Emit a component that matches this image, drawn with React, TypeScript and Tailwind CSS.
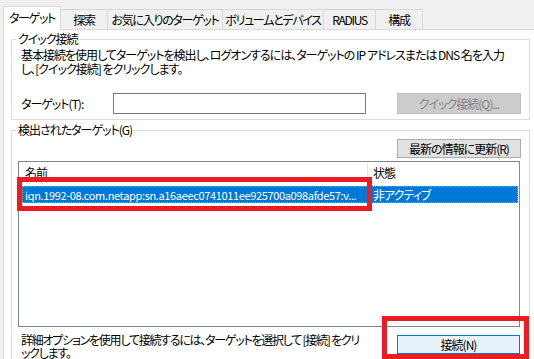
import React from "react";

const font = "font-['MS_UI_Gothic','Noto_Sans_CJK_JP',sans-serif] [font-feature-settings:'palt'] tracking-[-1px]";

function Tab({ label, w, selected }: { label: string; w: string; selected?: boolean }) {
  if (selected) {
    return (
      <div className={`${w} h-[24px] -mb-px relative z-10 bg-white border border-b-0 border-[#d9d9d9] flex items-center justify-center text-[12px] leading-[14px] pb-[2px] whitespace-nowrap tracking-[-1.3px]`}>
        {label}
      </div>
    );
  }
  return (
    <div className={`${w} h-[20px] bg-[#f0f0f0] border-t border-r border-[#d9d9d9] flex items-center justify-center text-[12px] leading-[14px] whitespace-nowrap tracking-[-1.3px]`}>
      {label}
    </div>
  );
}

export default function App() {
  return (
    <div className={`w-[534px] h-[359px] overflow-hidden bg-[#f0f0f0] relative text-black ${font}`}>
      {/* tabs */}
      <div className="h-[29px] flex items-end pl-[3px]">
        <Tab label="ターゲット" w="w-[58px]" selected />
        <Tab label="探索" w="w-[47px]" />
        <Tab label="お気に入りのターゲット" w="w-[115px]" />
        <Tab label="ボリュームとデバイス" w="w-[101px]" />
        <Tab label="RADIUS" w="w-[52px]" />
        <Tab label="構成" w="w-[47px]" />
      </div>

      {/* page */}
      <div className="ml-[3px] w-[560px] h-[340px] bg-white border border-[#d9d9d9] pl-[7px] pt-[9px]">
        {/* group 1 */}
        <div className="w-[519px] h-[81px] border border-[#dcdcdc]">
          <div className="-mt-[9px] ml-[4px] px-[2px] w-fit bg-white h-[16px] leading-[16px] text-[12px] whitespace-nowrap">クイック接続</div>
          <div className="pl-[9px] mt-[1px] text-[12px] leading-[14px] whitespace-nowrap">
            <div>基本接続を使用してターゲットを検出し、ログオンするには、ターゲットの IP アドレスまたは DNS 名を入力</div>
            <div>し、[クイック接続] をクリックします。</div>
          </div>
          <div className="pl-[9px] mt-[17px] flex items-center h-[21px]">
            <div className="w-[92px] text-[12px] leading-[14px] whitespace-nowrap">ターゲット(T):</div>
            <div className="w-[253px] h-[21px] border border-[#7a7a7a] bg-white" />
            <div className="ml-[31px] w-[124px] h-[21px] bg-[#cccccc] border border-[#bfbfbf] text-[#838383] text-[12px] leading-[14px] flex items-center justify-center whitespace-nowrap">
              クイック接続(Q)...
            </div>
          </div>
        </div>

        {/* group 2 */}
        <div className="mt-[10px] w-[519px] h-[260px] border border-[#dcdcdc]">
          <div className="-mt-[9px] ml-[4px] px-[2px] w-fit bg-white h-[16px] leading-[16px] text-[12px] whitespace-nowrap">検出されたターゲット(G)</div>
          <div className="ml-[385px] mt-px w-[124px] h-[19px] bg-[#e1e1e1] border border-[#adadad] text-[12px] leading-[14px] flex items-center justify-center whitespace-nowrap">
            最新の情報に更新(R)
          </div>
          <div className="ml-[6px] mt-[3px] w-[502px] h-[166px] border border-[#828790] bg-white">
            <div className="h-[21px] flex text-[12px] leading-[14px]">
              <div className="w-[349px] border-r border-[#e5e5e5] pl-[6px] flex items-center">名前</div>
              <div className="pl-[5px] flex items-center">状態</div>
            </div>
            <div className="ml-[3px] mt-[3px] w-[496px] h-[17px] bg-[#0078d7] border border-dotted border-[#ff8728] flex items-center text-white text-[12px] leading-[14px]">
              <div className="w-[350px] pl-[2px] whitespace-nowrap overflow-hidden text-[11px] tracking-[-0.35px]">
                iqn.1992-08.com.netapp:sn.a16aeec0741011ee925700a098afde57:v...
              </div>
              <div className="whitespace-nowrap">非アクティブ</div>
            </div>
          </div>
          <div className="flex">
            <div className="w-[385px] pl-[9px] mt-[6px] text-[12px] leading-[13px] whitespace-nowrap tracking-[-1.25px]">
              <div>詳細オプションを使用して接続するには、ターゲットを選択して [接続] をクリ</div>
              <div>ックします。</div>
            </div>
            <div className="mt-[8px] w-[123px] h-[19px] bg-[#e5f1fb] border border-[#0078d7] text-[12px] leading-[14px] flex items-center justify-center whitespace-nowrap">
              接続(N)
            </div>
          </div>
        </div>
      </div>

      {/* annotation overlays */}
      <div className="absolute left-[17px] top-[177px] w-[355px] h-[34px] border-[5px] border-[#ec1c24] pointer-events-none" />
      <div className="absolute left-[382px] top-[316px] w-[147px] h-[43px] border-[5px] border-[#ec1c24] pointer-events-none" />
    </div>
  );
}
